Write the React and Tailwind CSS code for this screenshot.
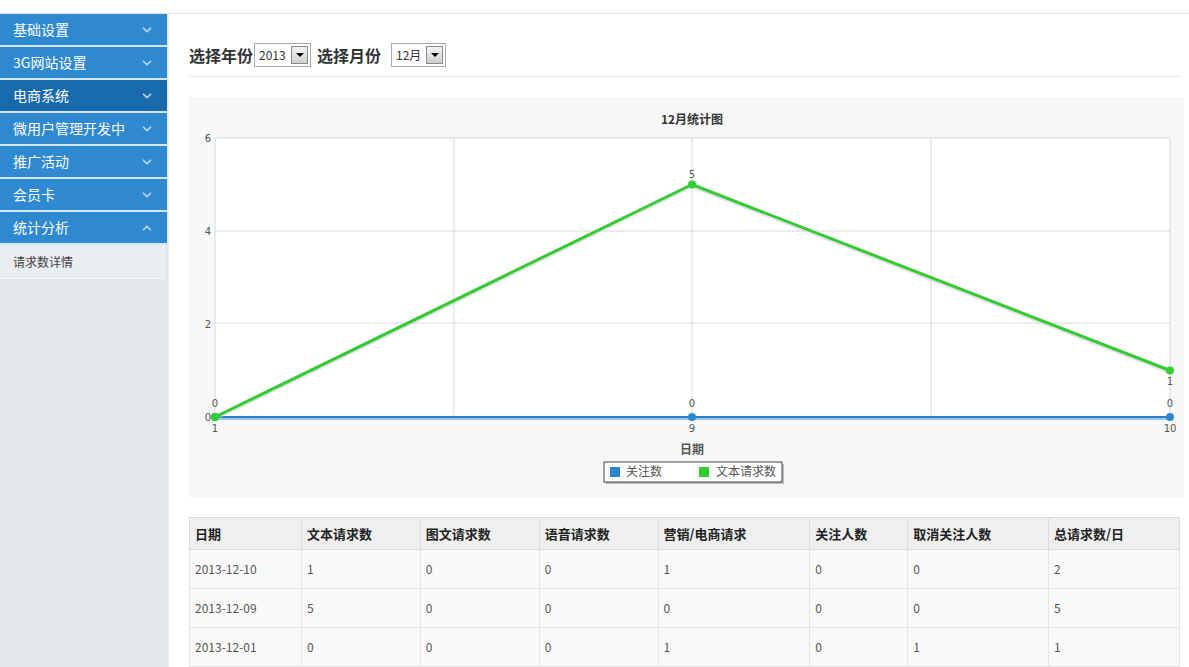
import { ChevronDown, ChevronUp } from 'lucide-react';

const menu = [
  { label: '基础设置' },
  { label: '3G网站设置' },
  { label: '电商系统', active: true },
  { label: '微用户管理开发中' },
  { label: '推广活动' },
  { label: '会员卡' },
  { label: '统计分析', open: true },
];

const cols = [
  { title: '日期', w: 'w-[112px]' },
  { title: '文本请求数', w: 'w-[119px]' },
  { title: '图文请求数', w: 'w-[119px]' },
  { title: '语音请求数', w: 'w-[119px]' },
  { title: '营销/电商请求', w: 'w-[152px]' },
  { title: '关注人数', w: 'w-[98px]' },
  { title: '取消关注人数', w: 'w-[141px]' },
  { title: '总请求数/日', w: 'w-[131px]' },
];

const rows = [
  ['2013-12-10', '1', '0', '0', '1', '0', '0', '2'],
  ['2013-12-09', '5', '0', '0', '0', '0', '0', '5'],
  ['2013-12-01', '0', '0', '0', '1', '0', '1', '1'],
];

function FakeSelect({ value, className }) {
  return (
    <div className={`h-[24px] border border-[#a9a9a9] bg-white flex items-center justify-between pl-[4px] pr-[2px] ${className}`}>
      <span className="text-[12px] text-[#333]">{value}</span>
      <span className="w-[17px] h-[18px] border border-[#8a8a8a] bg-gradient-to-b from-[#f4f4f4] to-[#cfcfcf] flex items-center justify-center">
        <span className="w-0 h-0 border-l-[4px] border-r-[4px] border-t-[4px] border-l-transparent border-r-transparent border-t-black" />
      </span>
    </div>
  );
}

function Chart() {
  const xs = [26, 503, 981];
  const yOf = (v) => 320 - (v / 6) * 279;
  const green = [0, 5, 1];
  const lbl = { fontFamily: '"DejaVu Sans", sans-serif', fontSize: 10, fill: '#555' };
  return (
    <svg width="100%" height="400" viewBox="0 0 995 400">
      <rect x="26" y="41" width="955" height="279" fill="#fff" />
      {[26, 265, 503, 742, 981].map((x) => (
        <line key={x} x1={x} y1="41" x2={x} y2="320" stroke="#d3dadd" />
      ))}
      {[41, 134, 226, 320].map((y) => (
        <line key={y} x1="26" y1={y} x2="981" y2={y} stroke="#d3dadd" />
      ))}
      {[6, 4, 2, 0].map((v) => (
        <text key={v} x="22" y={yOf(v) + 4} textAnchor="end" style={lbl}>{v}</text>
      ))}
      {['1', '9', '10'].map((t, i) => (
        <text key={t} x={xs[i]} y="335" textAnchor="middle" style={lbl}>{t}</text>
      ))}
      <text x="503" y="27" textAnchor="middle" fontWeight="bold" fontSize="12" fill="#333" fontFamily='"Noto Sans CJK SC", sans-serif'>12月统计图</text>
      <text x="503" y="357" textAnchor="middle" fontWeight="bold" fontSize="12" fill="#555" fontFamily='"Noto Sans CJK SC", sans-serif'>日期</text>

      <polyline points="26,322 981,322" fill="none" stroke="#9cc4e6" strokeWidth="2" />
      <polyline points="26,320 981,320" fill="none" stroke="#2a80c8" strokeWidth="2" />
      {xs.map((x) => (
        <circle key={x} cx={x} cy="320" r="4" fill="#2a88d0" />
      ))}
      {xs.map((x) => (
        <text key={x} x={x} y="310" textAnchor="middle" style={lbl}>0</text>
      ))}

      <polyline points={xs.map((x, i) => `${x},${yOf(green[i]) + 2}`).join(' ')} fill="none" stroke="#c9c9c9" strokeOpacity="0.5" strokeWidth="3" />
      <polyline points={xs.map((x, i) => `${x},${yOf(green[i])}`).join(' ')} fill="none" stroke="#35c935" strokeWidth="3" strokeLinejoin="round" />
      {xs.map((x, i) => (
        <circle key={x} cx={x} cy={yOf(green[i])} r="4" fill="#2fd12f" />
      ))}
      <text x="503" y={yOf(5) - 7} textAnchor="middle" style={lbl}>5</text>
      <text x="981" y={yOf(1) + 14} textAnchor="middle" style={lbl}>1</text>

      <rect x="417" y="367" width="178" height="20" fill="#999" opacity="0.6" />
      <rect x="415" y="365" width="178" height="20" fill="#fff" stroke="#444" />
      <rect x="421" y="370" width="10" height="10" fill="#2a88d0" />
      <text x="437" y="379" fontSize="12" fill="#555" fontFamily='"Noto Sans CJK SC", sans-serif'>关注数</text>
      <rect x="510" y="370" width="10" height="10" fill="#2fd12f" />
      <text x="527" y="379" fontSize="12" fill="#555" fontFamily='"Noto Sans CJK SC", sans-serif'>文本请求数</text>
    </svg>
  );
}

export default function App() {
  return (
    <div className="h-[667px] flex flex-col overflow-hidden bg-white" style={{ fontFamily: '"Noto Sans CJK SC", "Noto Sans", sans-serif' }}>
      <div className="h-[14px] shrink-0 border-b border-[#dde2e3]" />
      <div className="flex flex-1 min-h-0">
        <aside className="w-[169px] shrink-0 bg-[#e3e6ea] border-r border-[#e9ebee] flex flex-col">
          {menu.map((m) => (
            <div key={m.label}>
              <div className={`h-[33px] w-[167px] flex items-center justify-between pl-[13px] pr-[13px] text-[14px] text-white border-b-[2px] border-[#d5e6f3] ${m.active ? 'bg-[#196aab]' : 'bg-[#2e89d0]'}`}>
                <span>{m.label}</span>
                {m.open ? (
                  <ChevronUp size={14} strokeWidth={3} className="text-[#b9d5ee]" />
                ) : (
                  <ChevronDown size={14} strokeWidth={3} className="text-[#b9d5ee]" />
                )}
              </div>
              {m.open && (
                <div className="h-[34px] w-[165px] bg-[#eaedf0] border-b border-[#f2f4f6] flex items-center pl-[13px] text-[12px] text-[#444]">
                  请求数详情
                </div>
              )}
            </div>
          ))}
        </aside>

        <main className="flex-1 min-w-0 pl-[20px] pr-[9px]">
          <div className="pt-[29px] pb-[9px] border-b border-[#e8e8e8] flex items-center">
            <span className="text-[16px] font-bold text-[#333] leading-none">选择年份</span>
            <FakeSelect value="2013" className="w-[57px] ml-[1px]" />
            <span className="text-[16px] font-bold text-[#333] leading-none ml-[6px]">选择月份</span>
            <FakeSelect value="12月" className="w-[55px] ml-[10px]" />
          </div>

          <div className="mt-[20px] -mr-[4px] bg-[#f7f7f7]">
            <Chart />
          </div>

          <table className="mt-[20px] w-[991px] border-collapse text-left">
            <thead>
              <tr className="h-[32px] bg-[#efefef]">
                {cols.map((c) => (
                  <th key={c.title} className={`${c.w} border border-[#dddddd] pl-[5px] text-[13px] font-bold text-[#222]`}>{c.title}</th>
                ))}
              </tr>
            </thead>
            <tbody>
              {rows.map((r) => (
                <tr key={r[0]} className="h-[39px] bg-[#f9f9f9]">
                  {r.map((v, i) => (
                    <td key={i} className="border border-[#e5e5e5] pl-[5px] text-[12px] text-[#555]">{v}</td>
                  ))}
                </tr>
              ))}
            </tbody>
          </table>
        </main>
      </div>
    </div>
  );
}
